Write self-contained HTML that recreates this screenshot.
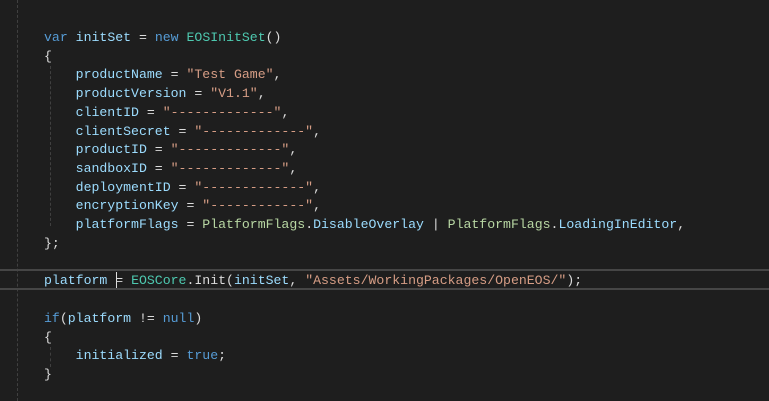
<!DOCTYPE html>
<html><head><style>
html,body{margin:0;padding:0;background:#1e1e1e;width:769px;height:401px;overflow:hidden}
.c{position:absolute;left:44px;top:29px;font-family:"Liberation Mono",monospace;font-size:13.2px;line-height:18.72px;color:#dcdcdc;white-space:pre}
.k{color:#569cd6}.v{color:#9cdcfe}.t{color:#4ec9b0}.s{color:#d69d85}.e{color:#b8d7a3}
.g{position:absolute;width:0;border-left:1px dashed #404040}
.hl{position:absolute;left:0;right:0;top:269px;height:17px;border-top:2px solid #464646;border-bottom:2px solid #464646}
.cur{position:absolute;left:116px;top:272px;width:1px;height:16px;background:#dcdcdc}
</style></head><body>
<div class="g" style="left:17px;top:0;height:401px"></div>
<div class="g" style="left:50px;top:66px;height:160px"></div>
<div class="g" style="left:50px;top:347px;height:20px"></div>
<div class="hl"></div>
<div class="c"><span class="k">var</span> <span class="v">initSet</span> = <span class="k">new</span> <span class="t">EOSInitSet</span>()
{
    <span class="v">productName</span> = <span class="s">"Test Game"</span>,
    <span class="v">productVersion</span> = <span class="s">"V1.1"</span>,
    <span class="v">clientID</span> = <span class="s">"-------------"</span>,
    <span class="v">clientSecret</span> = <span class="s">"-------------"</span>,
    <span class="v">productID</span> = <span class="s">"-------------"</span>,
    <span class="v">sandboxID</span> = <span class="s">"-------------"</span>,
    <span class="v">deploymentID</span> = <span class="s">"-------------"</span>,
    <span class="v">encryptionKey</span> = <span class="s">"------------"</span>,
    <span class="v">platformFlags</span> = <span class="e">PlatformFlags</span>.<span class="v">DisableOverlay</span> | <span class="e">PlatformFlags</span>.<span class="v">LoadingInEditor</span>,
};

<span class="v">platform</span> = <span class="t">EOSCore</span>.Init(<span class="v">initSet</span>, <span class="s">"Assets/WorkingPackages/OpenEOS/"</span>);

<span class="k">if</span>(<span class="v">platform</span> != <span class="k">null</span>)
{
    <span class="v">initialized</span> = <span class="k">true</span>;
}</div>
<div class="cur"></div>
</body></html>
